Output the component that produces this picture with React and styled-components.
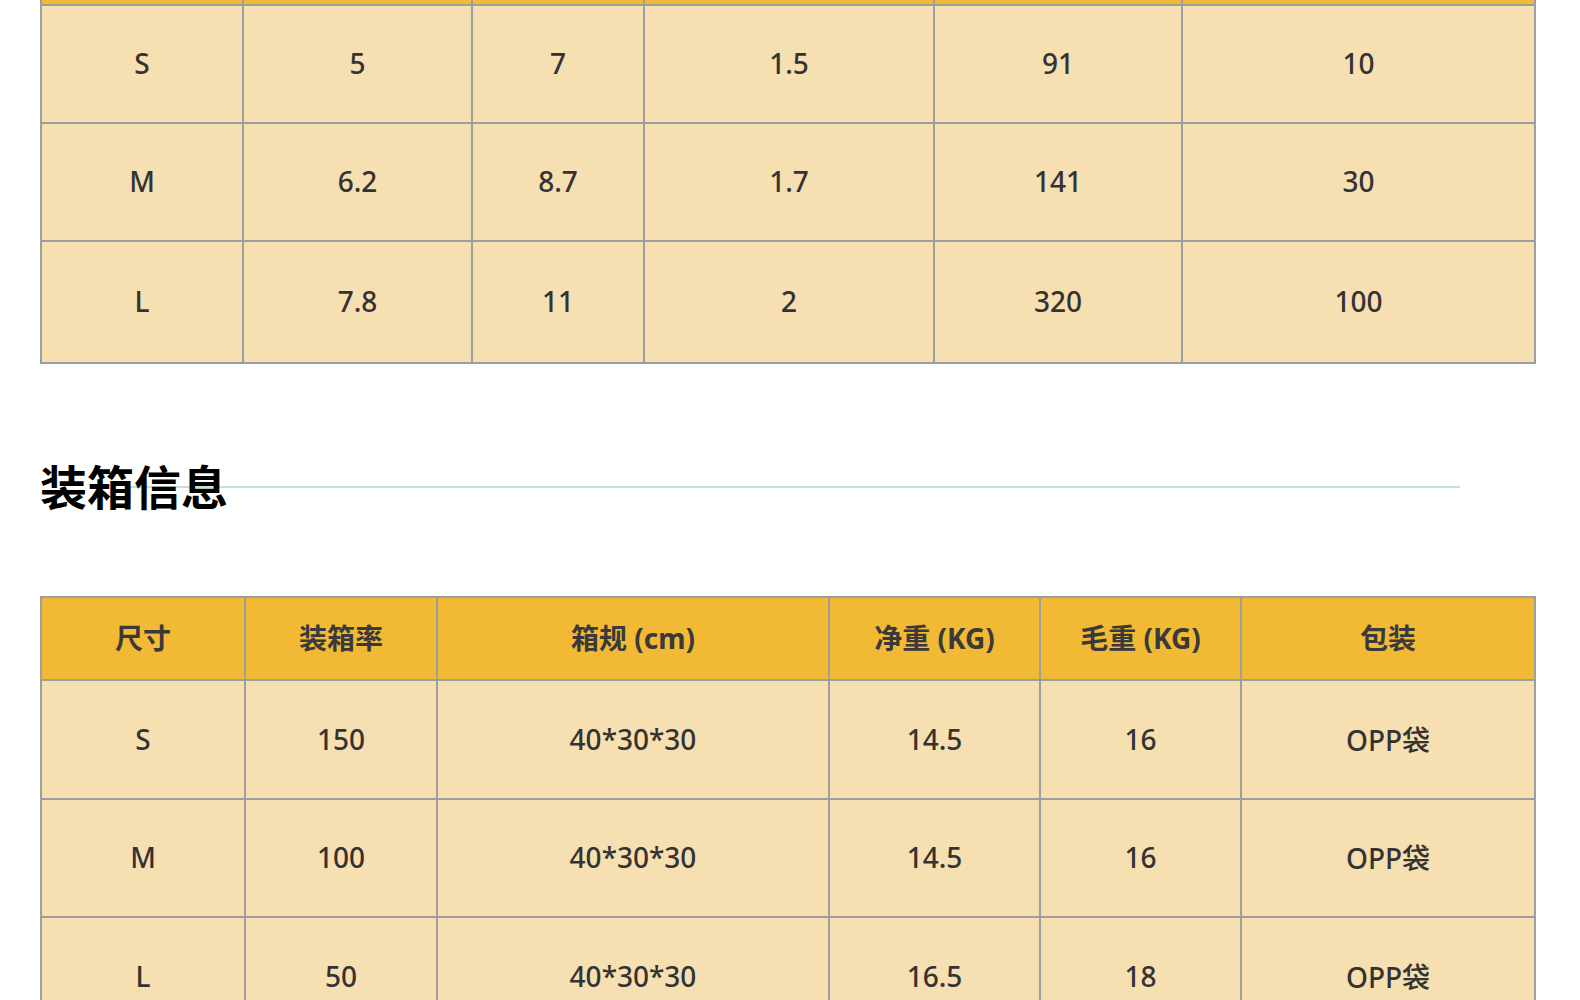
import React from "react";
import styled, { createGlobalStyle } from "styled-components";

const GlobalStyle = createGlobalStyle`
    html, body {
        margin: 0;
        padding: 0;
        background: #ffffff;
    }
    body {
        font-family: "Noto Sans", "Noto Sans CJK SC", sans-serif;
        color: #333333;
    }
`;

const Page = styled.div`
    width: 1580px;
    height: 1000px;
    overflow: hidden;
    padding: 0 44px 0 40px;
    box-sizing: border-box;
`;

const Grid = styled.div`
    display: grid;
    grid-template-columns: ${({ $cols }) => $cols};
    gap: 2px;
    padding: ${({ $open }) => ($open ? "0 2px 2px 2px" : "2px")};
    background: #9e9e9e;
    width: 1496px;
    box-sizing: border-box;
`;

const HeadCell = styled.div`
    height: ${({ $h }) => $h}px;
    background: #f2b935;
    display: flex;
    align-items: center;
    justify-content: center;
    padding-bottom: ${({ $h }) => ($h > 10 ? 3 : 0)}px;
    box-sizing: border-box;
    font-size: 28px;
    font-weight: 700;
    color: #3a3a3a;
`;

const Cell = styled.div`
    height: ${({ $h }) => $h}px;
    background: #f6dfb0;
    display: flex;
    align-items: center;
    justify-content: center;
    padding-bottom: 2px;
    box-sizing: border-box;
    font-size: 28px;
    font-weight: 500;
    color: #333333;
`;

const Heading = styled.h2`
    position: relative;
    margin: 93px 0 79px;
    height: 60px;
    line-height: 60px;
    font-size: 47px;
    font-weight: 700;
    color: #000000;

    &::before {
        content: "";
        position: absolute;
        left: 85px;
        width: 1335px;
        top: 29px;
        height: 2px;
        background: #c3e3cf;
    }
`;

const HeadingText = styled.span`
    position: relative;
    z-index: 1;
`;

const sizeRows = [
    ["S", "5", "7", "1.5", "91", "10"],
    ["M", "6.2", "8.7", "1.7", "141", "30"],
    ["L", "7.8", "11", "2", "320", "100"],
];
const sizeHeights = [116, 116, 120];

const packHead = ["尺寸", "装箱率", "箱规 (cm)", "净重 (KG)", "毛重 (KG)", "包装"];
const packRows = [
    ["S", "150", "40*30*30", "14.5", "16", "OPP袋"],
    ["M", "100", "40*30*30", "14.5", "16", "OPP袋"],
    ["L", "50", "40*30*30", "16.5", "18", "OPP袋"],
];
const packHeights = [117, 116, 117];

export default function App() {
    return (
        <>
            <GlobalStyle />
            <Page>
                <Grid $open $cols="200px 227px 170px 288px 246px 351px">
                    {sizeRows[0].map((_, i) => (
                        <HeadCell key={"h" + i} $h={4} />
                    ))}
                    {sizeRows.map((row, r) =>
                        row.map((v, i) => (
                            <Cell key={r + "-" + i} $h={sizeHeights[r]}>
                                {v}
                            </Cell>
                        ))
                    )}
                </Grid>

                <Heading>
                    <HeadingText>装箱信息</HeadingText>
                </Heading>

                <Grid $cols="202px 190px 390px 209px 199px 292px">
                    {packHead.map((h) => (
                        <HeadCell key={h} $h={81}>
                            {h}
                        </HeadCell>
                    ))}
                    {packRows.map((row, r) =>
                        row.map((v, i) => (
                            <Cell key={r + "-" + i} $h={packHeights[r]}>
                                {v}
                            </Cell>
                        ))
                    )}
                </Grid>
            </Page>
        </>
    );
}
